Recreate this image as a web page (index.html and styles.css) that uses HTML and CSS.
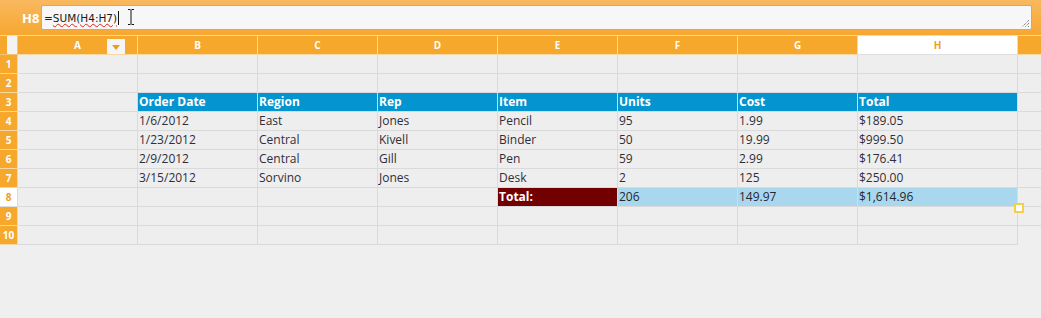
FILE: index.html
```html
<!DOCTYPE html>
<html lang="en">
<head>
  <meta charset="UTF-8">
  <title>Spreadsheet</title>
  <link rel="stylesheet" href="styles.css">
</head>
<body>
  <div class="formula-bar">
    <div class="name-box">H8</div>
    <div class="formula-input">
      <span class="formula-text">=<span class="misspelled">SUM(H4:H7)</span></span><span class="caret"></span>
      <svg class="ibeam" width="8" height="16" viewBox="0 0 8 16">
        <path d="M1 0.5h2.5M4.5 0.5h2.5M1 15.5h2.5M4.5 15.5h2.5M4 1v14" stroke="#111" stroke-width="1" fill="none"/>
      </svg>
      <svg class="grip" width="10" height="10" viewBox="0 0 10 10">
        <path d="M9 2L2 9M9 5L5 9M9 8L8 9" stroke="#555" stroke-width="1" stroke-dasharray="1 1"/>
      </svg>
    </div>
  </div>

  <div class="sheet">
    <div class="corner"><span></span></div>
    <div class="col-head">A<span class="filter-btn"></span></div>
    <div class="col-head">B</div>
    <div class="col-head">C</div>
    <div class="col-head">D</div>
    <div class="col-head">E</div>
    <div class="col-head">F</div>
    <div class="col-head">G</div>
    <div class="col-head active">H</div>
    <div class="col-head edge"></div>

    <div class="row-head">1</div>
    <div class="cell"></div><div class="cell"></div><div class="cell"></div><div class="cell"></div>
    <div class="cell"></div><div class="cell"></div><div class="cell"></div><div class="cell"></div><div class="cell edge"></div>

    <div class="row-head">2</div>
    <div class="cell"></div><div class="cell"></div><div class="cell"></div><div class="cell"></div>
    <div class="cell"></div><div class="cell"></div><div class="cell"></div><div class="cell"></div><div class="cell edge"></div>

    <div class="row-head">3</div>
    <div class="cell"></div>
    <div class="cell th">Order Date</div>
    <div class="cell th">Region</div>
    <div class="cell th">Rep</div>
    <div class="cell th">Item</div>
    <div class="cell th">Units</div>
    <div class="cell th">Cost</div>
    <div class="cell th">Total</div>
    <div class="cell edge"></div>

    <div class="row-head">4</div>
    <div class="cell"></div>
    <div class="cell">1/6/2012</div>
    <div class="cell">East</div>
    <div class="cell">Jones</div>
    <div class="cell">Pencil</div>
    <div class="cell">95</div>
    <div class="cell">1.99</div>
    <div class="cell">$189.05</div>
    <div class="cell edge"></div>

    <div class="row-head">5</div>
    <div class="cell"></div>
    <div class="cell">1/23/2012</div>
    <div class="cell">Central</div>
    <div class="cell">Kivell</div>
    <div class="cell">Binder</div>
    <div class="cell">50</div>
    <div class="cell">19.99</div>
    <div class="cell">$999.50</div>
    <div class="cell edge"></div>

    <div class="row-head">6</div>
    <div class="cell"></div>
    <div class="cell">2/9/2012</div>
    <div class="cell">Central</div>
    <div class="cell">Gill</div>
    <div class="cell">Pen</div>
    <div class="cell">59</div>
    <div class="cell">2.99</div>
    <div class="cell">$176.41</div>
    <div class="cell edge"></div>

    <div class="row-head">7</div>
    <div class="cell"></div>
    <div class="cell">3/15/2012</div>
    <div class="cell">Sorvino</div>
    <div class="cell">Jones</div>
    <div class="cell">Desk</div>
    <div class="cell">2</div>
    <div class="cell">125</div>
    <div class="cell">$250.00</div>
    <div class="cell edge"></div>

    <div class="row-head active">8</div>
    <div class="cell"></div>
    <div class="cell"></div>
    <div class="cell"></div>
    <div class="cell"></div>
    <div class="cell total-label">Total:</div>
    <div class="cell total">206</div>
    <div class="cell total">149.97</div>
    <div class="cell total selected">$1,614.96<span class="fill-handle"></span></div>
    <div class="cell edge"></div>

    <div class="row-head">9</div>
    <div class="cell"></div><div class="cell"></div><div class="cell"></div><div class="cell"></div>
    <div class="cell"></div><div class="cell"></div><div class="cell"></div><div class="cell"></div><div class="cell edge"></div>

    <div class="row-head">10</div>
    <div class="cell"></div><div class="cell"></div><div class="cell"></div><div class="cell"></div>
    <div class="cell"></div><div class="cell"></div><div class="cell"></div><div class="cell"></div><div class="cell edge last"></div>
  </div>
</body>
</html>
```

FILE: styles.css
```css
body {
  margin: 0;
  background: #efefef;
  font-family: "Open Sans", Arial, sans-serif;
  font-size: 12px;
  color: #2e2e3a;
  overflow: hidden;
}
.formula-bar {
  height: 35px;
  border-bottom: 1px solid #f9d9a6;
  background: linear-gradient(#f9b95e, #f6a730);
  display: flex;
  align-items: center;
}
.name-box {
  width: 41px;
  padding-left: 22px;
  box-sizing: border-box;
  color: white;
  font-weight: bold;
  font-size: 13px;
  padding-top: 1px;
}
.formula-input {
  position: relative;
  width: 991px;
  height: 25px;
  box-sizing: border-box;
  border: 1px solid #8fb3e2;
  border-radius: 2px;
  background: #f7f7f7;
  display: flex;
  align-items: center;
  padding-left: 2px;
  font-family: "DejaVu Sans", sans-serif;
  font-size: 10.5px;
  color: #1a1a1a;
}
.misspelled {
  text-decoration: underline wavy #e02020;
  text-decoration-thickness: 1px;
}
.caret {
  display: inline-block;
  width: 1px;
  height: 14px;
  background: #111;
  margin-left: 1px;
}
.ibeam {
  position: absolute;
  left: 85px;
  top: 3px;
}
.grip {
  position: absolute;
  right: 1px;
  bottom: 1px;
}
.sheet {
  display: grid;
  grid-template-columns: 18px repeat(7, 120px) 160px 1fr;
  grid-auto-rows: 19px;
}
.sheet > div {
  box-sizing: border-box;
  border-right: 1px solid #dadada;
  border-bottom: 1px solid #dadada;
  white-space: nowrap;
  overflow: hidden;
}
.sheet > .edge {
  border-right: none;
}
.sheet > .last {
  border-bottom: none;
  background: transparent;
}
.corner {
  background: #f6a82c;
  display: flex;
  justify-content: flex-end;
}
.sheet > .corner {
  border-color: #f6c27a;
}
.corner span {
  width: 10px;
  background: #f3f3f3;
}
.sheet > .col-head {
  position: relative;
  background: #f6a82c;
  border-color: #f9d7a0;
  color: white;
  font-weight: bold;
  font-size: 10px;
  text-align: center;
  line-height: 18px;
}
.sheet > .col-head.active {
  background: white;
  color: #f29c1f;
  border-color: #dedede;
}
.filter-btn {
  position: absolute;
  right: 12px;
  top: 3px;
  width: 18px;
  height: 15px;
  background: #f5f5f5;
}
.filter-btn::after {
  content: "";
  position: absolute;
  left: 5px;
  top: 6px;
  border-left: 4px solid transparent;
  border-right: 4px solid transparent;
  border-top: 5px solid #f29a1a;
}
.sheet > .row-head {
  background: #f6a82c;
  border-color: #f9d7a0;
  color: white;
  font-weight: bold;
  font-size: 10px;
  text-align: center;
  line-height: 18px;
}
.sheet > .row-head.active {
  background: white;
  color: #f29c1f;
  border-bottom-color: #dedede;
}
.cell {
  background: #eeeeee;
  padding-left: 1px;
  line-height: 18px;
}
.cell.th {
  background: #0494cf;
  color: white;
  font-weight: bold;
}
.cell.total-label {
  background: #720000;
  color: white;
  font-weight: bold;
}
.cell.total {
  background: #a9d8ee;
  color: #26262f;
}
.sheet > .selected {
  position: relative;
  overflow: visible;
}
.fill-handle {
  position: absolute;
  right: -7px;
  bottom: -7px;
  width: 6px;
  height: 6px;
  border: 2px solid #f4d04a;
  background: white;
  z-index: 1;
}
```
